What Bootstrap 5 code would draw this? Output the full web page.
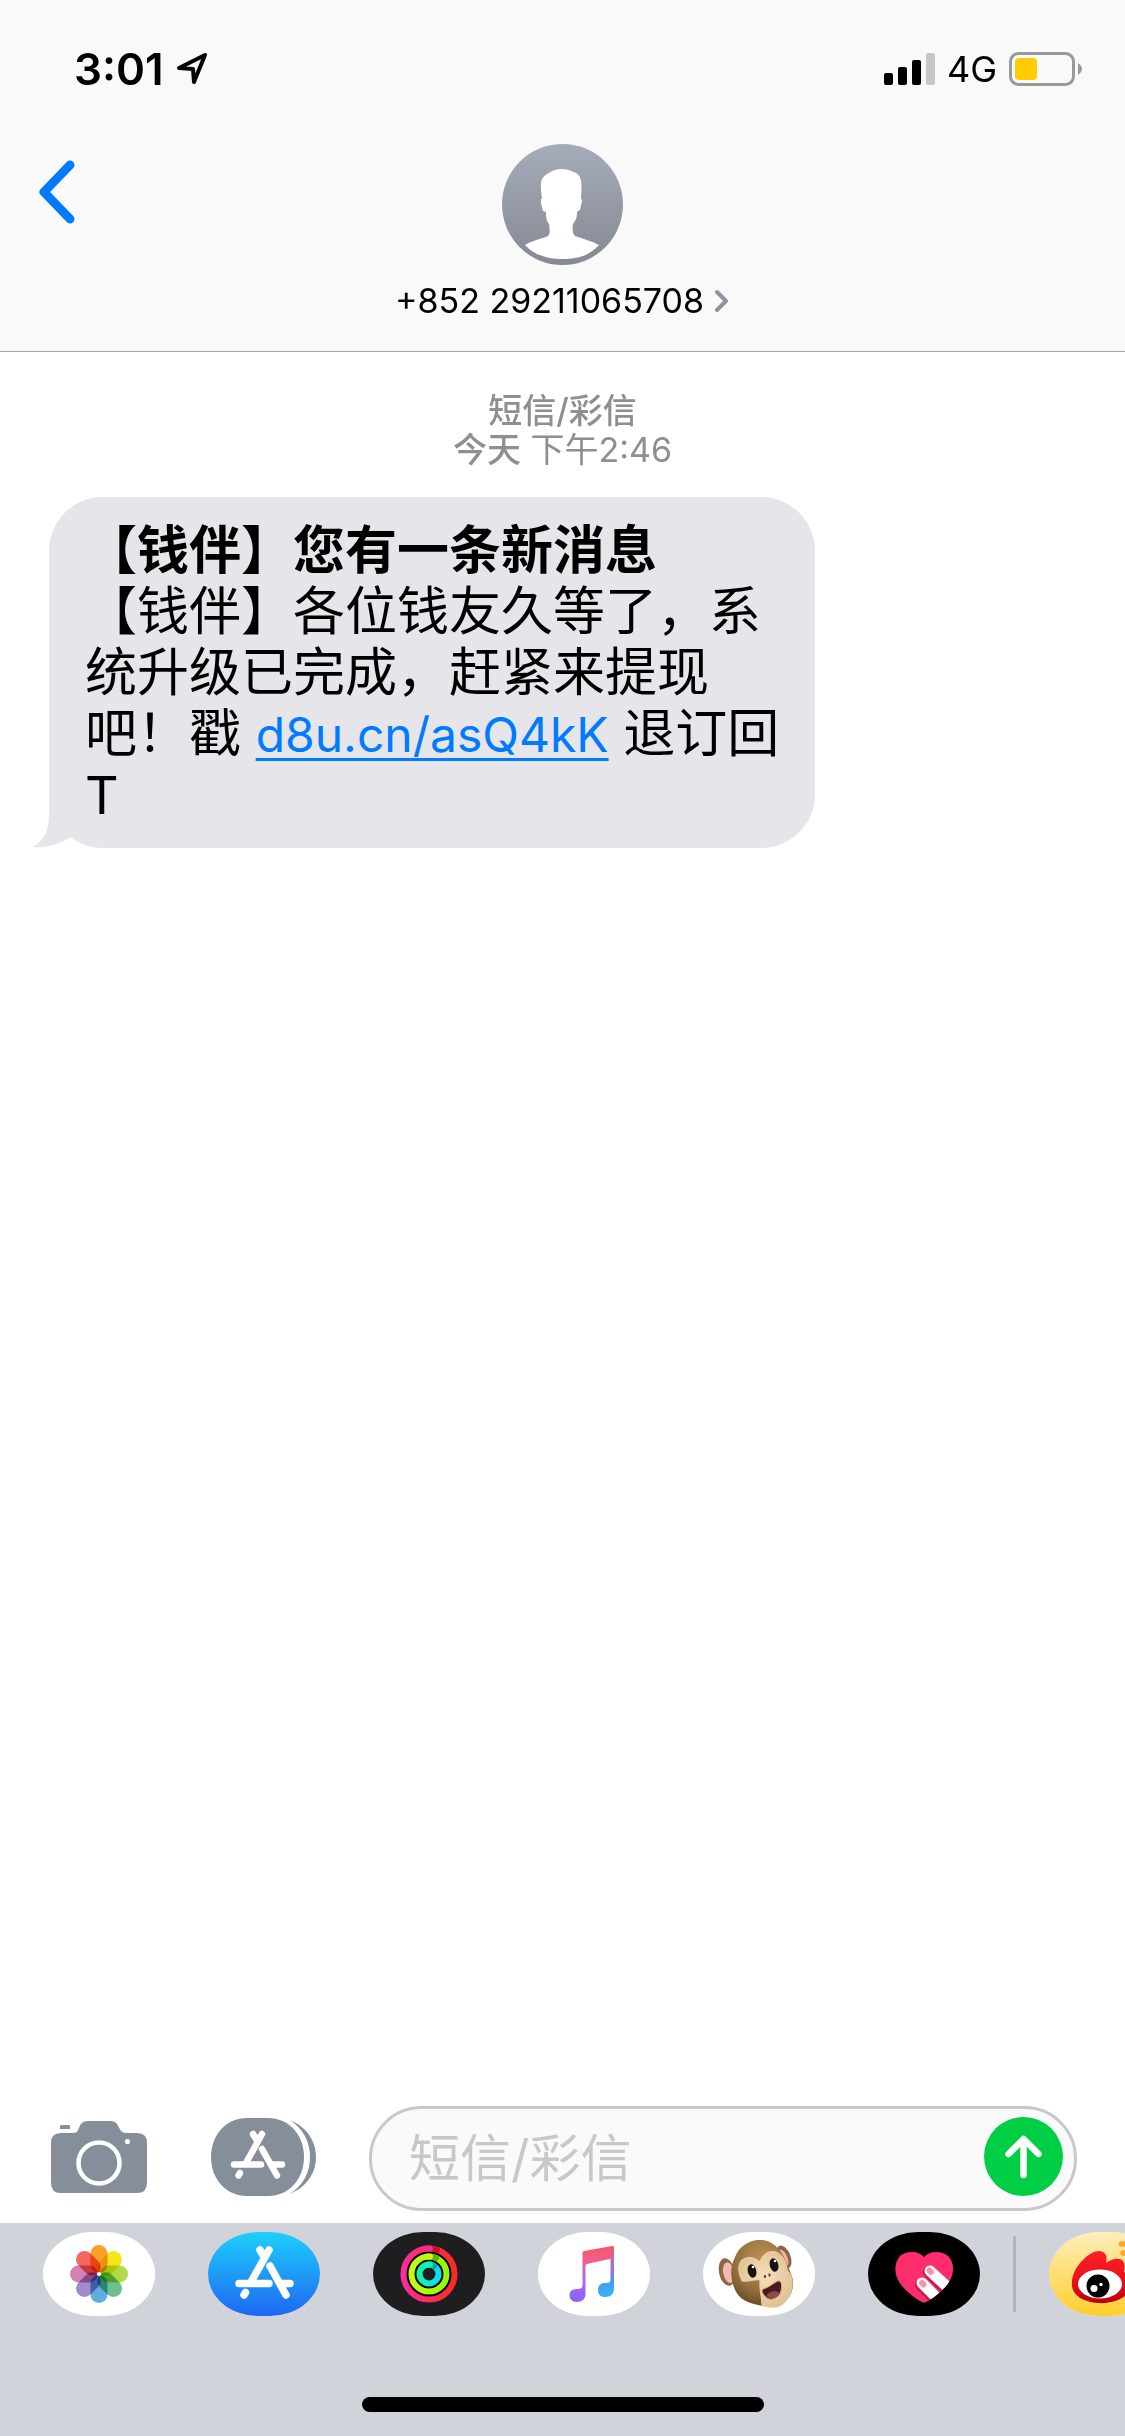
<!DOCTYPE html>
<html lang="zh-CN">
<head>
<meta charset="utf-8">
<meta name="viewport" content="width=device-width, initial-scale=1">
<title>信息</title>
<link rel="stylesheet" href="https://cdn.jsdelivr.net/npm/bootstrap@5.3.0/dist/css/bootstrap.min.css">
<script src="https://cdn.jsdelivr.net/npm/bootstrap@5.3.0/dist/js/bootstrap.bundle.min.js"></script>
<style>
body { font-family: Inter, "Noto Sans CJK SC", sans-serif; color: #000; background: #fff; }
svg { display: block; }
.top-area { background: #f9f9f9; border-bottom: 1px solid #a8a8a8; }
.status-row { padding: 44px 42px 0 74px; height: 92px; }
.status-set { gap: 12px; }
.clock { font-size: 44px; line-height: 50px; font-weight: 600; }
.network { font-size: 36px; line-height: 50px; }
.nav-grid { display: grid; grid-template-columns: 1fr auto 1fr; padding: 52px 33px 28px; align-items: start; }
.nav-grid .btn { border: 0; justify-self: start; margin-top: 14px; }
.contact-link { color: #000; text-decoration: none; gap: 14px; }
.contact-name { font-size: 34px; line-height: 44px; gap: 10px; }
.stamp { color: #8e8e93; font-size: 34px; line-height: 39px; padding-top: 39px; }
.thread { padding: 0 49px; }
.bubble { background: #e5e5ea; border-radius: 54px; width: fit-content; max-width: 766px; padding: 23px 30px 22px 36px; margin-top: 28px; font-size: 52px; line-height: 61px; }
.bubble a { color: #007aff; font-size: 48px; text-decoration-thickness: 3px; text-underline-offset: 6px; }
.tail { position: absolute; left: -17px; bottom: 0; }
.compose { padding: 0 48px 12px 51px; }
.compose .btn { border: 0; }
.tools { gap: 64px; padding: 0 53px 3px 0; }
.field { border: 3px solid #c7c7cc; border-radius: 53px; background: #fafafa; padding: 8px 11px 8px 37px; }
.field .form-control { border: 0; background: transparent; font-size: 51px; line-height: 83px; height: 83px; padding: 0; box-shadow: none; }
.field .form-control::placeholder { color: #c7c7cc; opacity: 1; }
.tray { background: #d0d3da; padding-top: 9px; }
.app-strip { gap: 53px; padding-left: 43px; overflow: hidden; }
.pill { width: 112px; height: 84px; border: 0; border-radius: 50px / 42px; overflow: hidden; flex: none; }
.petals { mix-blend-mode: multiply; }
.divider { width: 3px; height: 76px; border-radius: 2px; background: #b0b3bb; margin: 0 -20px; flex: none; }
.home-bar { width: 402px; height: 15px; border-radius: 8px; background: #000; margin: 81px auto 24px; }
</style>
</head>
<body>
<div class="d-flex flex-column min-vh-100">
<header class="top-area">
  <div class="status-row d-flex justify-content-between align-items-start">
    <div class="status-set d-flex align-items-center">
      <span class="clock">3:01</span>
      <svg width="34" height="34" viewBox="0 0 34 34" fill="none" stroke="#000" stroke-width="4" stroke-linejoin="round"><path d="M3 16 L29 3 L18 30 L17 17 Z"/></svg>
    </div>
    <div class="status-set d-flex align-items-center">
      <svg width="51" height="34" viewBox="0 0 51 34"><rect x="0" y="21" width="9" height="12" rx="2"/><rect x="14" y="15" width="9" height="18" rx="2"/><rect x="28" y="8" width="9" height="25" rx="2"/><rect x="42" y="1" width="9" height="32" rx="2" fill="#c7c7c7"/></svg>
      <span class="network">4G</span>
      <svg width="74" height="34" viewBox="0 0 74 34"><rect x="1.5" y="1.5" width="63" height="31" rx="8" fill="none" stroke="#999" stroke-width="3"/><rect x="6" y="6" width="22" height="22" rx="4" fill="#fc0"/><path d="M69 11 Q77 17 69 23Z" fill="#999"/></svg>
    </div>
  </div>
  <nav class="nav-grid">
    <button type="button" class="btn p-0" aria-label="返回"><svg width="44" height="70" viewBox="0 0 44 70" fill="none" stroke="#007aff" stroke-width="9" stroke-linecap="round" stroke-linejoin="round"><path d="M37 7 L11 34 L37 61"/></svg></button>
    <a href="#" class="contact-link d-flex flex-column align-items-center">
      <svg width="121" height="121" viewBox="0 0 121 121"><defs><linearGradient id="av" x2="0" y2="1"><stop stop-color="#a5abb9"/><stop offset="1" stop-color="#858993"/></linearGradient></defs><circle cx="60.5" cy="60.5" r="60.5" fill="url(#av)"/><path fill="#fff" d="M60 25 C67 25 71 28 74 29 C80 32 80 40 79 54 C81 56 79 60 78 66 L75 68 C75 75 73 77 71 80 C70 86 71 90 73 92 C81 95 90 97 97 101 C86 113 73 115 60 115 C47 115 33 112 23 101 C31 96 40 95 46 92 C48 90 48 86 47 80 C45 77 44 76 44 68 L41 67 C39 60 38 56 40 54 C38 40 38 34 45 30 C49 27 54 25 60 25Z"/></svg>
      <span class="contact-name d-flex align-items-center">+852 29211065708 <svg width="16" height="26" viewBox="0 0 16 26" fill="none" stroke="#8e939d" stroke-width="4" stroke-linecap="round" stroke-linejoin="round"><path d="M3 4 L12 13 L3 22"/></svg></span>
    </a>
  </nav>
</header>

<main class="thread flex-grow-1">
  <div class="stamp text-center"><div class="fw-medium">短信/彩信</div><div><span class="fw-medium">今天</span> 下午2:46</div></div>
  <div class="bubble position-relative"><strong class="fw-bold">【钱伴】您有一条新消息</strong><br>【钱伴】各位钱友久等了，系统升级已完成，赶紧来提现吧！戳 <a href="#">d8u.cn/asQ4kK</a> 退订回T
    <svg class="tail" width="60" height="60" viewBox="0 0 60 60"><path fill="#e5e5ea" d="M17 0 V25 C17 42 13 53 0 59 C14 60 27 57 38 49 L50 20Z"/></svg>
  </div>
</main>

<form class="compose d-flex align-items-center">
  <div class="tools d-flex align-items-center">
    <button type="button" class="btn p-0" aria-label="相机"><svg width="96" height="74" viewBox="0 0 96 74"><path fill="#868e99" d="M9 6 q0-1 2-1 h6 q2 0 2 1 v3 H9Z M10 13 H22 C28 13 27 8 30 4 Q32 1 37 1 H59 Q64 1 66 4 C69 9 70 13 75 13 H86 Q96 13 96 23 V63 Q96 73 86 73 H10 Q0 73 0 63 V23 Q0 13 10 13Z"/><circle cx="48" cy="43" r="20.500" fill="none" stroke="#fff" stroke-width="4.500"/><circle cx="76.500" cy="21.500" r="2.600" fill="#fff"/></svg></button>
    <button type="button" class="btn p-0" aria-label="App Store"><svg width="105" height="78" viewBox="0 0 105 78"><path fill="#868e99" d="M36 0 H57 C78 0 93 17 93 39 C93 61 78 78 57 78 H36 C15 78 0 61 0 39 C0 17 15 0 36 0Z"/><path fill="#868e99" d="M79 2 C95 9 105 22 105 39 C105 56 95 69 79 76 C92 67 99 55 99 39 C99 23 92 11 79 2Z"/><g stroke="#fff" stroke-width="6.500" stroke-linecap="round" fill="none"><path d="M51 16 L35 45 M42 16 L45 21 M29 55 L27.500 57.500 M23 46.500 H50 M51 31 L66 57.500 M62 46.500 H71"/></g></svg></button>
  </div>
  <div class="field d-flex align-items-start flex-grow-1">
    <label class="visually-hidden" for="msg">短信/彩信</label>
    <input id="msg" type="text" class="form-control" placeholder="短信/彩信">
    <button type="submit" class="btn p-0 flex-shrink-0" aria-label="发送"><svg width="79" height="79" viewBox="0 0 79 79"><circle cx="39.500" cy="39.500" r="39.500" fill="#00cf46"/><path d="M39.500 58 V23 M24.500 37 L39.500 22 L54.500 37" fill="none" stroke="#fff" stroke-width="6.500" stroke-linecap="round" stroke-linejoin="round"/></svg></button>
  </div>
</form>

<footer class="tray">
  <div class="app-strip d-flex align-items-center">
    <button type="button" class="pill p-0" aria-label="照片"><svg width="112" height="84" viewBox="0 0 112 84">
      <rect width="112" height="84" fill="#fff"/>
      <g transform="translate(56 42)">
        <rect class="petals" x="-8.500" y="-29" width="17" height="28" rx="8.500" fill="#f8a22c"/>
        <rect class="petals" x="-8.500" y="-29" width="17" height="28" rx="8.500" fill="#f5e51b" transform="rotate(45)"/>
        <rect class="petals" x="-8.500" y="-29" width="17" height="28" rx="8.500" fill="#b5d84a" transform="rotate(90)"/>
        <rect class="petals" x="-8.500" y="-29" width="17" height="28" rx="8.500" fill="#6cc08b" transform="rotate(135)"/>
        <rect class="petals" x="-8.500" y="-29" width="17" height="28" rx="8.500" fill="#62addf" transform="rotate(180)"/>
        <rect class="petals" x="-8.500" y="-29" width="17" height="28" rx="8.500" fill="#a18ccb" transform="rotate(225)"/>
        <rect class="petals" x="-8.500" y="-29" width="17" height="28" rx="8.500" fill="#d283b3" transform="rotate(270)"/>
        <rect class="petals" x="-8.500" y="-29" width="17" height="28" rx="8.500" fill="#f1685f" transform="rotate(315)"/>
        <circle r="2" fill="#fff"/>
      </g></svg></button>
    <button type="button" class="pill p-0" aria-label="App Store"><svg width="112" height="84" viewBox="0 0 112 84">
      <defs><linearGradient id="as" x2="0" y2="1"><stop stop-color="#1fcffb"/><stop offset="1" stop-color="#1e67f2"/></linearGradient></defs>
      <rect width="112" height="84" fill="url(#as)"/>
      <g stroke="#fff" stroke-width="7.500" stroke-linecap="round" fill="none"><path d="M61 18 L43 50 M52 18 L55 23 M37.500 60.500 L36 63 M31 51.500 H61 M62 34 L78 63 M74 51.500 H82"/></g></svg></button>
    <button type="button" class="pill p-0" aria-label="健身记录"><svg width="112" height="84" viewBox="0 0 112 84">
      <defs>
        <linearGradient id="r1" x1="0" x2="1"><stop stop-color="#fa2c98"/><stop offset="1" stop-color="#fc2b20"/></linearGradient>
        <linearGradient id="r2" x1="0" x2="1"><stop stop-color="#c8fa0c"/><stop offset="1" stop-color="#90fb08"/></linearGradient>
        <linearGradient id="r3" x1="0" x2="1"><stop stop-color="#0ff7a2"/><stop offset="1" stop-color="#0bdcfb"/></linearGradient>
      </defs>
      <rect width="112" height="84" fill="#1e1e20"/>
      <g fill="none" stroke-width="6" stroke="#000"><circle cx="56" cy="42" r="21.500" stroke-width="3"/><circle cx="56" cy="42" r="13.500" stroke-width="3"/><circle cx="56" cy="42" r="25.500" stroke="url(#r1)"/><circle cx="56" cy="42" r="17.500" stroke="url(#r2)"/><circle cx="56" cy="42" r="9.500" stroke="url(#r3)"/></g>
      <g fill="none" stroke-width="6" stroke-linecap="round"><path d="M59 16.700 A25.500 25.500 0 0 1 64 17.800" stroke="#c3161c"/><path d="M59 24.800 A17.500 17.500 0 0 1 63 26" stroke="#5db30a"/><path d="M58 32.700 A9.500 9.500 0 0 1 61 33.900" stroke="#0aa6a6"/><path d="M52 16.800 L57 16.500" stroke="#fa2d84"/><path d="M53 24.800 L57 24.500" stroke="#c4fa0c"/><path d="M54 32.800 L57 32.600" stroke="#0ff5b4"/></g></svg></button>
    <button type="button" class="pill p-0" aria-label="音乐"><svg width="112" height="84" viewBox="0 0 112 84">
      <defs><linearGradient id="mu" gradientUnits="userSpaceOnUse" x1="62" y1="14" x2="62" y2="68"><stop stop-color="#fb5566"/><stop offset=".3" stop-color="#ee5f92"/><stop offset=".65" stop-color="#b765e8"/><stop offset="1" stop-color="#8a63fb"/></linearGradient>
      <linearGradient id="mb" gradientUnits="userSpaceOnUse" x1="62" y1="16" x2="62" y2="62"><stop stop-color="#fb5566"/><stop offset=".35" stop-color="#b46ac8"/><stop offset=".7" stop-color="#4f93f7"/><stop offset="1" stop-color="#35b0fa"/></linearGradient></defs>
      <rect width="112" height="84" fill="#fff"/>
      <path fill="url(#mu)" d="M44.500 21 Q44.500 19.500 46 19 L74 14 Q76 13.500 76 15.500 V26 L49 32 Q47.500 32.500 47.500 34 V62 C47.500 67 44 70 39 70 C34 70 31.500 67 31.500 63.500 C31.500 59 34 57 40 57 C43 57 44.500 56 44.500 53Z"/>
      <path fill="url(#mb)" d="M72.500 18 L76 15 V56 C76 62 73 65 67 65 C62 65 60 62 60 58 C60 54 62 51 68 51 C71 51 72.500 50 72.500 47Z"/></svg></button>
    <button type="button" class="pill p-0" aria-label="拟我表情"><svg width="112" height="84" viewBox="0 0 112 84">
      <defs><radialGradient id="mk" cx=".5" cy=".3" r=".75"><stop stop-color="#bd9154"/><stop offset=".6" stop-color="#94703d"/><stop offset="1" stop-color="#5f4320"/></radialGradient>
      <radialGradient id="fc" cx=".5" cy=".45" r=".7"><stop stop-color="#f5e0bd"/><stop offset="1" stop-color="#dcb988"/></radialGradient></defs>
      <rect width="112" height="84" fill="#fff"/>
      <g transform="rotate(-12 24 40)"><ellipse cx="24" cy="40" rx="8" ry="14" fill="#8b6840"/><ellipse cx="25.500" cy="41" rx="5.500" ry="10.500" fill="#f2b9b4"/></g>
      <g transform="rotate(-22 81 25)"><ellipse cx="81" cy="25" rx="6.500" ry="12" fill="#8b6840"/><ellipse cx="80" cy="26" rx="4" ry="9" fill="#f0b3ac"/></g>
      <path fill="url(#mk)" d="M55 8 C67 7 76 15 81 25 C84 32 87 38 90 48 C91 60 85 69 77 74 C70 76 62 74 55 73 C40 70 33 64 30 52 C27 42 28 33 32 25 C36 15 44 9 55 8Z"/>
      <path fill="url(#fc)" stroke="#e9d2a8" stroke-width="1" d="M39 49 C36 42 34 35 38 29 C43 24 50 24 57 30 C59 22 66 18 73 20 C80 23 83 29 84 38 C88 42 90 48 89 55 C87 65 82 73 74 75 C68 76 62 75 59 73 C59 66 56 58 57 48 C51 47 47 50 39 49Z"/>
      <g fill="#15120f"><ellipse cx="49" cy="39" rx="4.300" ry="6.800" transform="rotate(-14 49 39)"/><ellipse cx="71" cy="33" rx="4.300" ry="6.800" transform="rotate(-14 71 33)"/></g>
      <circle cx="50" cy="35" r="1.300" fill="#fff"/><circle cx="72" cy="29" r="1.300" fill="#fff"/>
      <ellipse cx="62" cy="44.500" rx="1.200" ry="1.800" fill="#6b4a2c"/><ellipse cx="66.500" cy="43" rx="1.200" ry="1.800" fill="#6b4a2c"/>
      <path fill="#4c1a1d" stroke="#d3ae80" stroke-width="1" d="M60 57 C65 56 72 50 75 49 C79 48 79 54 78 59 C77 65 70 68 66 67 C62 66 57 59 60 57Z"/><path fill="#91494b" d="M63 64 C66 59 73 58 77 61 C75 66 68 68 63 64Z"/></svg></button>
    <button type="button" class="pill p-0" aria-label="Digital Touch"><svg width="112" height="84" viewBox="0 0 112 84">
      <defs><clipPath id="hc"><path d="M56 25 C62 18 74 19 80 24 C88 32 86 45 78 54 C72 61 64 67 58 70 Q56 71 54 70 C48 67 40 61 34 54 C26 45 25 32 32 24 C38 19 50 18 56 25Z"/></clipPath></defs>
      <rect width="112" height="84" fill="#000"/>
      <g clip-path="url(#hc)"><rect width="112" height="84" fill="#ff2d6b"/>
      <g stroke-linecap="round"><path d="M61 40 L84 63 M53 53 L74 74" stroke="#c21c50" stroke-width="12"/><path d="M62 39 L86 61 M54 51 L76 73" stroke="#fff" stroke-width="11"/><path d="M61.500 38.500 L63 40 M54 51 L55.500 52.500" stroke="#ff8fb2" stroke-width="6"/></g></g></svg></button>
    <span class="divider"></span>
    <button type="button" class="pill p-0" aria-label="微博"><svg width="112" height="84" viewBox="0 0 112 84">
      <defs><linearGradient id="wb" x2="0" y2="1"><stop stop-color="#fdeebb"/><stop offset="1" stop-color="#ffcf2c"/></linearGradient>
      <linearGradient id="wr" x2="0" y2="1"><stop stop-color="#ff1f26"/><stop offset=".6" stop-color="#e8101c"/><stop offset="1" stop-color="#b8000c"/></linearGradient></defs>
      <rect width="112" height="84" fill="url(#wb)"/>
      <path fill="url(#wr)" d="M23 54 C22 44 27 34 35 27 C41 21 49 17 54 20 C58 22 58 26 57 31 C62 27 71 25 74 29 C76 32 76 36 75 40 C83 42 85 50 82 57 C77 67 63 72 49 71 C35 70 24 64 23 54Z"/>
      <ellipse cx="51" cy="52" rx="22" ry="14.500" fill="#fff"/><circle cx="49" cy="54" r="11.500"/><circle cx="45" cy="56.500" r="3.500" fill="#fff"/><circle cx="52" cy="52.500" r="1.700" fill="#fff"/>
      <path d="M72.500 12 H86 M74 21 H84" stroke="#fca52b" stroke-width="5.500" stroke-linecap="round"/></svg></button>
  </div>
  <div class="home-bar"></div>
</footer>
</div>
</body>
</html>
